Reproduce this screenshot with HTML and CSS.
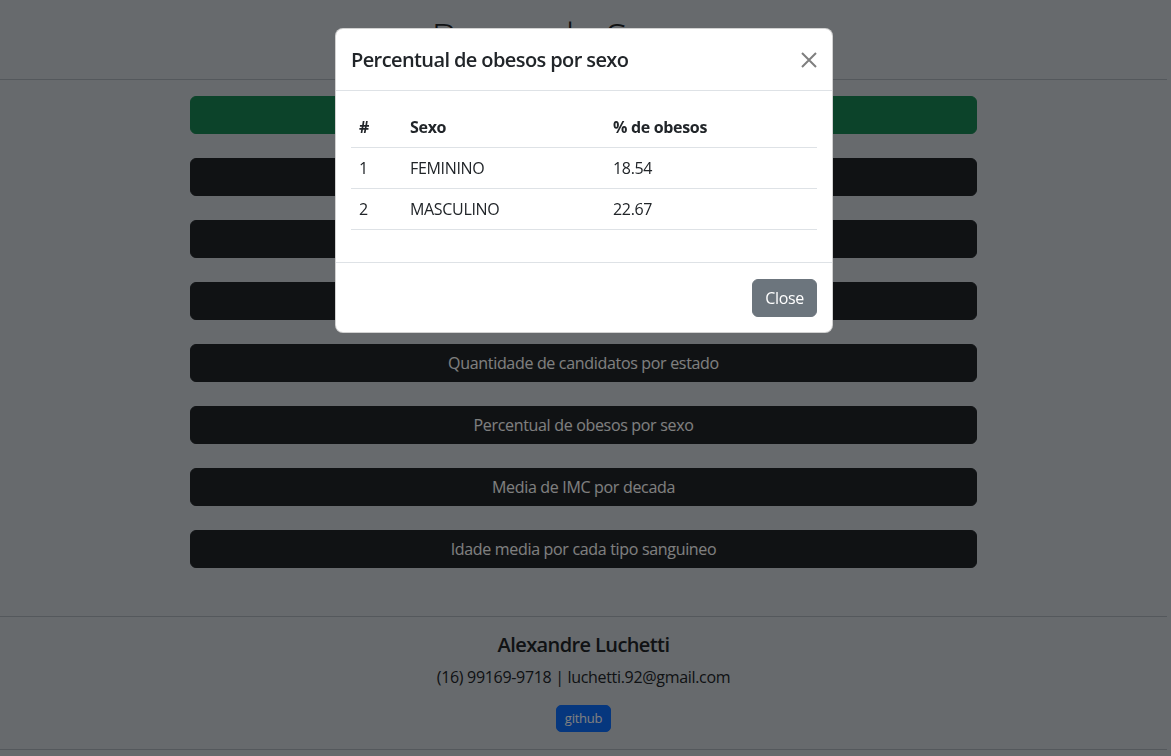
FILE: index.html
```html
<!DOCTYPE html>
<html lang="pt-BR">
<head>
<meta charset="utf-8">
<title>Banco de Sangue</title>
<link rel="stylesheet" href="styles.css">
</head>
<body>
<div class="page">
  <header class="site-header">
    <h1 class="site-title">Banco de Sangue</h1>
  </header>
  <main class="actions">
    <button class="btn btn-success btn-block">Candidatos por estado</button>
    <button class="btn btn-dark btn-block">Candidatos por idade</button>
    <button class="btn btn-dark btn-block">Doadores por tipo sanguineo</button>
    <button class="btn btn-dark btn-block">Receptores por tipo sanguineo</button>
    <button class="btn btn-dark btn-block">Quantidade de candidatos por estado</button>
    <button class="btn btn-dark btn-block">Percentual de obesos por sexo</button>
    <button class="btn btn-dark btn-block">Media de IMC por decada</button>
    <button class="btn btn-dark btn-block">Idade media por cada tipo sanguineo</button>
  </main>
  <footer class="site-footer">
    <h5 class="author">Alexandre Luchetti</h5>
    <p class="contact">(16) 99169-9718 | luchetti.92@gmail.com</p>
    <a class="btn btn-primary btn-sm" href="#">github</a>
  </footer>
</div>

<div class="backdrop"></div>
<div class="modal-layer">
  <div class="modal-content">
    <div class="modal-header">
      <h5 class="modal-title">Percentual de obesos por sexo</h5>
      <button class="btn-close" aria-label="Close">
        <svg width="16" height="16" viewBox="0 0 16 16"><path d="M1 1 L15 15 M15 1 L1 15" stroke="currentColor" stroke-width="2" fill="none"/></svg>
      </button>
    </div>
    <div class="modal-body">
      <table class="table">
        <thead>
          <tr><th class="c1">#</th><th class="c2">Sexo</th><th class="c3">% de obesos</th></tr>
        </thead>
        <tbody>
          <tr><td>1</td><td>FEMININO</td><td>18.54</td></tr>
          <tr><td>2</td><td>MASCULINO</td><td>22.67</td></tr>
        </tbody>
      </table>
    </div>
    <div class="modal-footer">
      <button class="btn btn-secondary">Close</button>
    </div>
  </div>
</div>
</body>
</html>
```
FILE: styles.css
```css
* { box-sizing: border-box; }
html, body { margin: 0; padding: 0; }
body {
  font-family: "Open Sans", "Noto Sans", sans-serif;
  font-size: 16px;
  line-height: 1.5;
  letter-spacing: -0.02em;
  color: #212529;
  background: #ced4da;
  height: 756px;
  overflow: hidden;
}
.page { padding-right: 4px; }
.site-header {
  text-align: center;
  padding: 14px 0 9px;
  border-bottom: 1px solid #a8b0b8;
}
.site-title {
  margin: 0 0 8px;
  font-size: 39.6px;
  font-weight: 300;
  line-height: 48px;
}
.actions {
  width: 787px;
  margin: 0 auto;
  padding: 16px 0 48px;
  display: flex;
  flex-direction: column;
  gap: 24px;
}
.btn {
  display: inline-block;
  font-family: inherit;
  font-size: 16px;
  line-height: 24px;
  letter-spacing: -0.02em;
  padding: 6px 12px;
  border: 1px solid transparent;
  border-radius: 6px;
  color: #fff;
  text-align: center;
  text-decoration: none;
  cursor: pointer;
}
.btn-block { width: 100%; }
.btn-success { background: #198754; border-color: #198754; }
.btn-dark { background: #212529; border-color: #212529; }
.btn-primary { background: #0d6efd; border-color: #0d6efd; }
.btn-secondary { background: #6c757d; border-color: #6c757d; }
.btn-sm { font-size: 13px; line-height: 19px; padding: 3px 8px; border-radius: 5px; }

.site-footer {
  text-align: center;
  border-top: 1px solid #a8b0b8;
  border-bottom: 1px solid #a8b0b8;
  padding: 16px 0 17px;
}
.author {
  margin: 0 0 8px;
  font-size: 20px;
  font-weight: 600;
  line-height: 24px;
  letter-spacing: -0.03em;
}
.contact { margin: 0 0 16px; }

.backdrop {
  position: fixed;
  inset: 0;
  background: rgba(0, 0, 0, 0.5);
}
.modal-layer {
  position: fixed;
  inset: 0;
  display: flex;
  justify-content: center;
  align-items: flex-start;
  padding: 28px 3px 0 0;
}
.modal-content {
  width: 498px;
  background: #fff;
  border: 1px solid rgba(0, 0, 0, 0.175);
  border-radius: 8px;
  overflow: hidden;
}
.modal-header {
  display: flex;
  align-items: center;
  padding: 16px 15px 15px 15px;
  border-bottom: 1px solid #dee2e6;
}
.modal-title {
  margin: 0;
  font-size: 20px;
  font-weight: 600;
  line-height: 30px;
  letter-spacing: -0.03em;
  flex: 1;
}
.btn-close {
  width: 16px;
  height: 16px;
  padding: 0;
  border: 0;
  background: none;
  color: #7f7f7f;
  display: flex;
  cursor: pointer;
}
.modal-body { padding: 16px 15px; }
.table {
  width: 100%;
  border-collapse: collapse;
  margin-bottom: 16px;
  text-align: left;
}
.table th, .table td {
  padding: 8px;
  border-bottom: 1px solid #dee2e6;
  vertical-align: top;
}
.table th { font-weight: 700; }
.c1 { width: 51px; }
.c2 { width: 203px; }
.modal-footer {
  display: flex;
  justify-content: flex-end;
  padding: 16px 15px 15px;
  border-top: 1px solid #dee2e6;
}
```
